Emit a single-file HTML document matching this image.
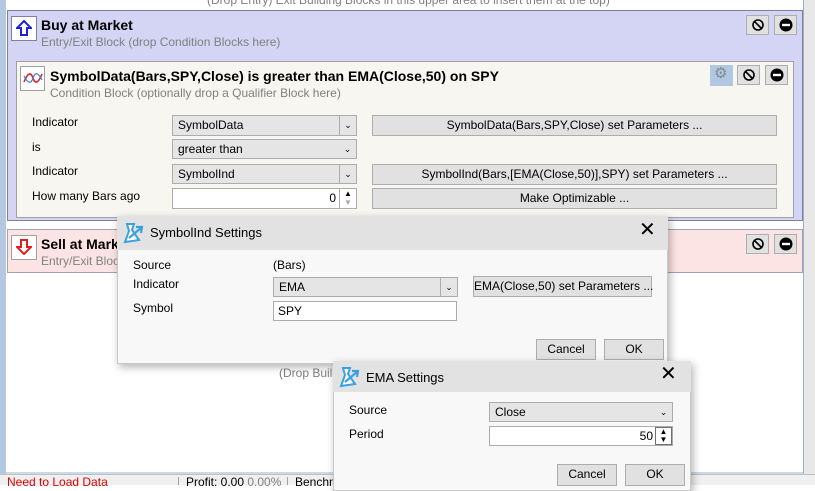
<!DOCTYPE html>
<html><head><style>
*{box-sizing:border-box;margin:0;padding:0}
body{width:815px;height:485px;overflow:hidden;position:relative;background:#fff;font-family:"Liberation Sans",sans-serif;font-size:12px;color:#000}
.a{position:absolute}
.t{position:absolute;white-space:nowrap;line-height:14px}
.btn{position:absolute;background:#e1e1e1;border:1px solid #adadad;text-align:center;line-height:18px;font-size:12px;white-space:nowrap}
.cmb{position:absolute;background:#e5e5e5;border:1px solid #acacac;line-height:18px;padding-left:5px}
.cmb .dd{position:absolute;right:0;top:0;bottom:0;width:17px;border-left:1px solid #acacac;text-align:center;font-size:9px}
.inp{position:absolute;background:#fff;border:1px solid #acacac;line-height:18px;padding:0 4px}
.ib{position:absolute;width:23px;height:20px;background:#e1e1e1;border:1px solid #adadad}
.g{color:#808080}
.h{font-weight:bold;font-size:14px}
</style></head><body>
<div class="a" style="left:0;top:0;width:6px;height:485px;background:#b4c8e2"></div>
<div class="a" style="left:803px;top:0;width:12px;height:485px;background:#e8e8e8;border-left:1px solid #a0b0c8"></div>
<div class="t g" style="left:207px;top:-7px">(Drop Entry) Exit Building Blocks in this upper area to insert them at the top)</div>

<div class="a" style="left:7px;top:10px;width:796px;height:211px;background:#d4d4f4;border:1px solid #7e7e9e"></div>
<div class="a" style="left:11px;top:16px;width:26px;height:25px;background:#fff;border:1px solid #8080a0"></div>
<svg class="a" style="left:16px;top:20px" width="16" height="16"><path d="M8 1 L15 8 L11 8 L11 15 L5 15 L5 8 L1 8 Z" fill="#fff" stroke="#2020e0" stroke-width="2"/></svg>
<div class="t h" style="left:41px;top:18px">Buy at Market</div>
<div class="t g" style="left:41px;top:35px">Entry/Exit Block (drop Condition Blocks here)</div>
<div class="ib" style="left:746px;top:15px"></div>
<svg class="a" style="left:751px;top:18px" width="14" height="14"><circle cx="7" cy="7" r="5" fill="none" stroke="#000" stroke-width="1.6"/><line x1="3.5" y1="3.5" x2="10.5" y2="10.5" stroke="#000" stroke-width="1.6"/></svg>
<div class="ib" style="left:774px;top:15px"></div>
<svg class="a" style="left:779px;top:18px" width="14" height="14"><circle cx="7" cy="7" r="6.5" fill="#000"/><rect x="3" y="5.8" width="8" height="2.4" fill="#fff"/></svg>

<div class="a" style="left:16px;top:61px;width:778px;height:157px;background:#f8f6f0;border:1px solid #a0a0a0"></div>
<div class="a" style="left:20px;top:66px;width:25px;height:25px;background:#fff;border:1px solid #a0a0a0"></div>
<svg class="a" style="left:23px;top:70px" width="20" height="17"><path d="M1 12 C5 2 8 2 10 8 C12 14 15 14 19 4" fill="none" stroke="#e02020" stroke-width="1.6"/><path d="M1 6 C5 14 8 14 10 8 C12 2 15 2 19 10" fill="none" stroke="#4080e0" stroke-width="1.2"/></svg>
<div class="t h" style="left:50px;top:69px">SymbolData(Bars,SPY,Close) is greater than EMA(Close,50) on SPY</div>
<div class="t g" style="left:50px;top:86px">Condition Block (optionally drop a Qualifier Block here)</div>
<div class="a" style="left:710px;top:65px;width:23px;height:21px;background:#b0c8e2"></div>
<div class="t" style="left:714px;top:67px;color:#808890;font-size:15px">⚙</div>
<div class="ib" style="left:737px;top:65px"></div>
<svg class="a" style="left:742px;top:68px" width="14" height="14"><circle cx="7" cy="7" r="5" fill="none" stroke="#000" stroke-width="1.6"/><line x1="3.5" y1="3.5" x2="10.5" y2="10.5" stroke="#000" stroke-width="1.6"/></svg>
<div class="ib" style="left:765px;top:65px"></div>
<svg class="a" style="left:770px;top:68px" width="14" height="14"><circle cx="7" cy="7" r="6.5" fill="#000"/><rect x="3" y="5.8" width="8" height="2.4" fill="#fff"/></svg>

<div class="t" style="left:32px;top:115px">Indicator</div>
<div class="t" style="left:32px;top:140px">is</div>
<div class="t" style="left:32px;top:164px">Indicator</div>
<div class="t" style="left:32px;top:189px">How many Bars ago</div>
<div class="cmb" style="left:172px;top:115px;width:185px;height:21px">SymbolData<div class="dd">&#8964;</div></div>
<div class="cmb" style="left:172px;top:139px;width:185px;height:20px">greater than<div class="dd" style="border:none">&#8964;</div></div>
<div class="cmb" style="left:172px;top:164px;width:185px;height:20px">SymbolInd<div class="dd">&#8964;</div></div>
<div class="inp" style="left:172px;top:188px;width:185px;height:21px;text-align:right;padding-right:20px">0</div>
<div class="a" style="left:339px;top:189px;width:17px;height:19px;border-left:1px solid #acacac;font-size:8px;line-height:9px;text-align:center">▲<br><span style="color:#aaa">▼</span></div>
<div class="btn" style="left:372px;top:115px;width:405px;height:21px">SymbolData(Bars,SPY,Close) set Parameters ...</div>
<div class="btn" style="left:372px;top:164px;width:405px;height:21px">SymbolInd(Bars,[EMA(Close,50)],SPY) set Parameters ...</div>
<div class="btn" style="left:372px;top:188px;width:405px;height:21px">Make Optimizable ...</div>

<div class="a" style="left:7px;top:229px;width:796px;height:44px;background:#fde4e4;border:1px solid #a0a0b8"></div>
<div class="a" style="left:11px;top:235px;width:26px;height:25px;background:#fff;border:1px solid #a0a0a0"></div>
<svg class="a" style="left:16px;top:239px" width="16" height="16"><path d="M8 15 L15 8 L11 8 L11 1 L5 1 L5 8 L1 8 Z" fill="#fff" stroke="#e02020" stroke-width="2"/></svg>
<div class="t h" style="left:41px;top:237px">Sell at Market</div>
<div class="t g" style="left:41px;top:254px">Entry/Exit Block</div>
<div class="ib" style="left:746px;top:234px"></div>
<svg class="a" style="left:751px;top:237px" width="14" height="14"><circle cx="7" cy="7" r="5" fill="none" stroke="#000" stroke-width="1.6"/><line x1="3.5" y1="3.5" x2="10.5" y2="10.5" stroke="#000" stroke-width="1.6"/></svg>
<div class="ib" style="left:774px;top:234px"></div>
<svg class="a" style="left:779px;top:237px" width="14" height="14"><circle cx="7" cy="7" r="6.5" fill="#000"/><rect x="3" y="5.8" width="8" height="2.4" fill="#fff"/></svg>

<div class="t g" style="left:279px;top:366px">(Drop Building Blocks here)</div>
<div class="a" style="left:6px;top:472px;width:797px;height:2px;background:#c8dce8"></div>

<div class="a" style="left:0;top:474px;width:815px;height:11px;background:#f0f0f0;border-top:1px solid #c0c0c0"></div>
<div class="t" style="left:7px;top:475px;color:#e00000">Need to Load Data</div>
<div class="a" style="left:178px;top:477px;width:1px;height:8px;background:#a0a0a0"></div>
<div class="t" style="left:186px;top:475px">Profit: 0.00 <span class="g">0.00%</span></div>
<div class="a" style="left:287px;top:477px;width:1px;height:8px;background:#a0a0a0"></div>
<div class="t" style="left:295px;top:475px">Benchmark</div>

<div class="a" style="left:117px;top:216px;width:551px;height:148px;background:#f8f8f8;border:1px solid #c8c8c8;box-shadow:2px 3px 8px rgba(0,0,0,.3)"></div>
<div class="a" style="left:117px;top:216px;width:551px;height:34px;background:#e2e2e2"></div>
<svg class="a" style="left:121px;top:222px" width="24" height="24"><path d="M6 2 L13 2 L11 8 L18 18 L4 20 L8 9 Z" fill="#fff" stroke="#3aa0e0" stroke-width="2"/><path d="M8 16 L20 6 M15 5 L21 5 L20 11" fill="none" stroke="#3aa0e0" stroke-width="2.2"/></svg>
<div class="t" style="left:150px;top:226px;font-size:13px">SymbolInd Settings</div>
<div class="t" style="left:639px;top:223px;font-size:20px">✕</div>
<div class="t" style="left:133px;top:258px">Source</div>
<div class="t" style="left:133px;top:277px">Indicator</div>
<div class="t" style="left:133px;top:301px">Symbol</div>
<div class="t" style="left:273px;top:258px">(Bars)</div>
<div class="cmb" style="left:273px;top:277px;width:185px;height:20px">EMA<div class="dd">&#8964;</div></div>
<div class="inp" style="left:273px;top:301px;width:184px;height:20px">SPY</div>
<div class="btn" style="left:473px;top:276px;width:179px;height:21px">EMA(Close,50) set Parameters ...</div>
<div class="btn" style="left:536px;top:339px;width:60px;height:21px">Cancel</div>
<div class="btn" style="left:604px;top:339px;width:60px;height:21px">OK</div>

<div class="a" style="left:333px;top:361px;width:358px;height:130px;background:#f8f8f8;border:1px solid #c8c8c8;box-shadow:2px 3px 8px rgba(0,0,0,.3)"></div>
<div class="a" style="left:333px;top:361px;width:358px;height:31px;background:#e2e2e2"></div>
<svg class="a" style="left:337px;top:366px" width="24" height="24"><path d="M6 2 L13 2 L11 8 L18 18 L4 20 L8 9 Z" fill="#fff" stroke="#3aa0e0" stroke-width="2"/><path d="M8 16 L20 6 M15 5 L21 5 L20 11" fill="none" stroke="#3aa0e0" stroke-width="2.2"/></svg>
<div class="t" style="left:366px;top:371px;font-size:13px">EMA Settings</div>
<div class="t" style="left:660px;top:367px;font-size:20px">✕</div>
<div class="t" style="left:349px;top:403px">Source</div>
<div class="t" style="left:349px;top:427px">Period</div>
<div class="cmb" style="left:489px;top:402px;width:184px;height:20px">Close<div class="dd" style="border:none">&#8964;</div></div>
<div class="inp" style="left:489px;top:426px;width:184px;height:20px;text-align:right;padding-right:19px">50</div>
<div class="a" style="left:655px;top:427px;width:17px;height:18px;border:1px solid #707070;font-size:8px;line-height:8px;text-align:center">▲<br>▼</div>
<div class="btn" style="left:557px;top:464px;width:60px;height:22px">Cancel</div>
<div class="btn" style="left:625px;top:464px;width:60px;height:22px">OK</div>
</body></html>
